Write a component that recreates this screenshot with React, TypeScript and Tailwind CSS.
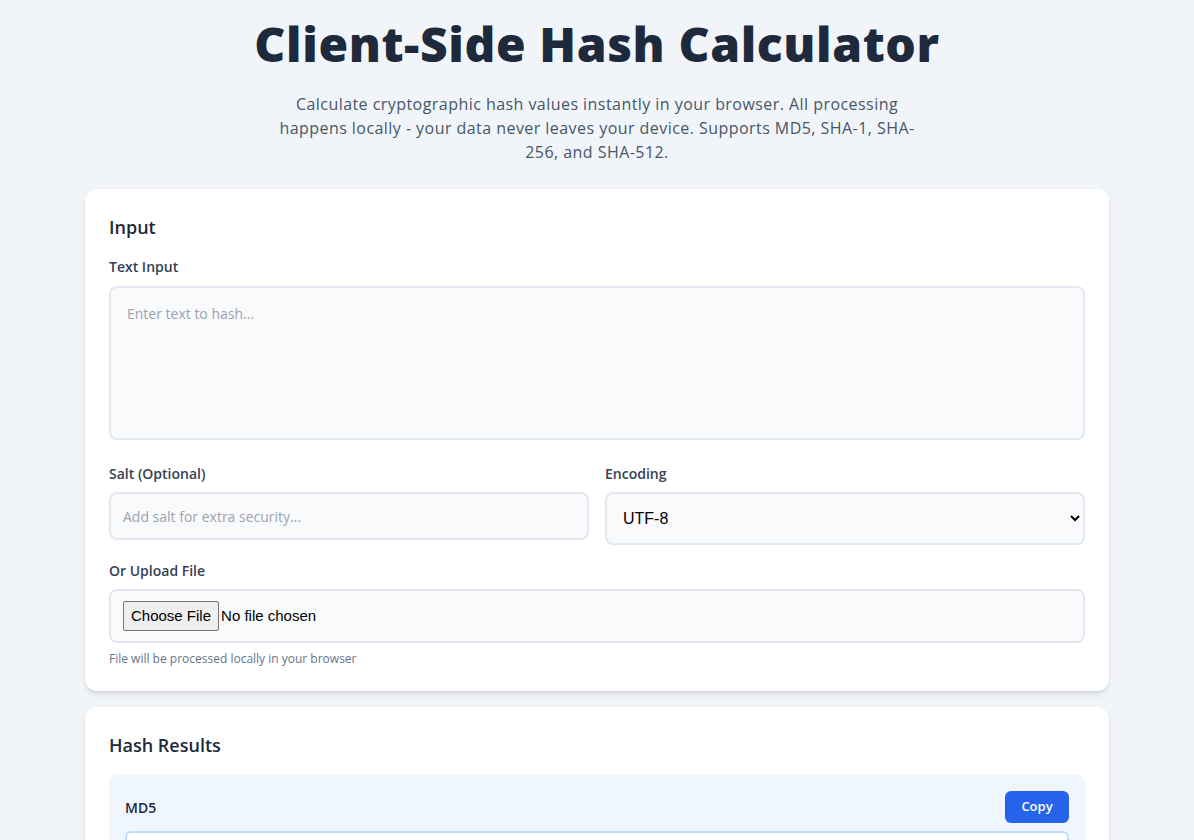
export default function App() {
  const font = "font-['Open_Sans',sans-serif]";
  return (
    <div className={`min-h-screen bg-[#f1f5f9] ${font} text-slate-800`}>
      <div className="mx-auto max-w-5xl pt-[14px] pb-10">
        <header className="flex flex-col items-center text-center">
          <h1 className="text-[48px] leading-[60px] font-extrabold tracking-[0.6px] text-[#1e293b]">
            Client-Side Hash Calculator
          </h1>
          <p className="mt-[18px] max-w-[648px] text-[16px] leading-6 tracking-[0.45px] text-[#475569]">
            Calculate cryptographic hash values instantly in your browser. All processing happens locally - your data never leaves your device. Supports MD5, SHA-1, SHA-256, and SHA-512.
          </p>
        </header>

        <section className="mt-[25px] rounded-xl bg-white p-6 shadow-md">
          <h2 className="text-[18px] leading-7 font-semibold text-[#1e293b]">Input</h2>
          <div className="mt-4">
            <label className="block text-[14px] leading-5 font-semibold text-[#334155]">Text Input</label>
            <textarea
              placeholder="Enter text to hash..."
              className="mt-[9px] block h-[154px] w-full resize-none rounded-lg border-2 border-[#e2e8f0] bg-[#f8fafc] px-4 py-4 text-[14px] leading-5 placeholder:text-[#9ca3af] outline-none"
            />
          </div>

          <div className="mt-6 grid grid-cols-2 gap-4">
            <div>
              <label className="block text-[14px] leading-5 font-semibold text-[#334155]">Salt (Optional)</label>
              <input
                type="text"
                placeholder="Add salt for extra security..."
                className="mt-2 block h-12 w-full rounded-lg border-2 border-[#e2e8f0] bg-[#f8fafc] px-3 text-[14px] placeholder:text-[#9ca3af] outline-none"
              />
            </div>
            <div>
              <label className="block text-[14px] leading-5 font-semibold text-[#334155]">Encoding</label>
              <select
                defaultValue="utf8"
                className="mt-2 block h-[53px] w-full rounded-lg border-2 border-[#e2e8f0] bg-[#f8fafc] px-3 font-['Liberation_Sans',Arial,sans-serif] text-[16px] text-black outline-none"
              >
                <option value="utf8">UTF-8</option>
                <option value="ascii">ASCII</option>
              </select>
            </div>
          </div>

          <div className="mt-4">
            <label className="block text-[14px] leading-5 font-semibold text-[#334155]">Or Upload File</label>
            <input
              type="file"
              className="mt-2 block w-full rounded-lg border-2 border-[#e2e8f0] bg-[#f8fafc] px-3 py-[10px] font-['Liberation_Sans',Arial,sans-serif] text-[15px] leading-[26px] text-black file:mr-[2px] file:rounded-[2px] file:border file:border-[#767676] file:bg-[#efefef] file:px-[7px] file:py-[1px] file:text-[15px] file:text-black"
            />
            <p className="mt-2 text-[12px] leading-4 text-[#64748b]">File will be processed locally in your browser</p>
          </div>
        </section>

        <section className="mt-4 rounded-xl bg-white p-6 shadow-md">
          <h2 className="text-[18px] leading-7 font-semibold text-[#1e293b]">Hash Results</h2>
          <div className="mt-4 rounded-lg bg-[#eff6ff] p-4">
            <div className="flex items-center justify-between">
              <span className="text-[14px] font-semibold text-[#1e293b]">MD5</span>
              <button className="h-8 w-16 rounded-md bg-[#2563eb] text-[13px] font-semibold text-white">Copy</button>
            </div>
            <div className="mt-2 h-12 rounded-md border-2 border-[#bfdbfe] bg-white" />
          </div>
        </section>
      </div>
    </div>
  );
}
